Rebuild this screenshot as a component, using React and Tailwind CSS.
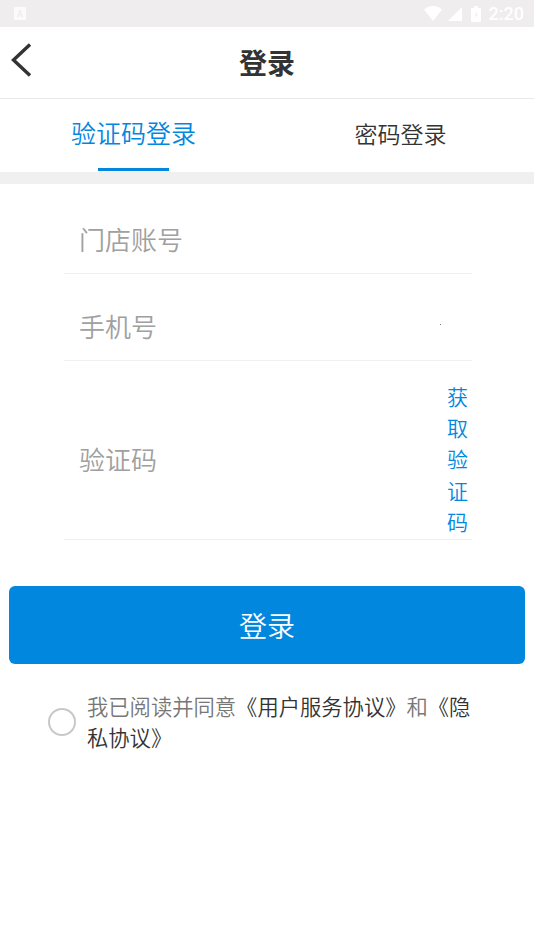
import { useState } from 'react';

const fields = [
  { name: 'store', placeholder: '门店账号', row: 'h-[90px] pt-[22px]' },
  { name: 'phone', placeholder: '手机号', row: 'h-[87px] pt-[18px]' },
  { name: 'code', placeholder: '验证码', row: 'h-[179px] pt-[18px]' },
];

const StatusBar = () => (
  <div className="h-[27px] bg-[#efedee] flex items-center justify-between pl-[14px] pr-[10px] text-white">
    <div className="w-3 h-[13px] rounded-[1px] bg-[#fcfbfc] flex items-center justify-center">
      <span className="text-[9px] leading-none font-bold text-[#efedee]">A</span>
    </div>
    <div className="flex items-center">
      <svg width="18" height="15" viewBox="0 0 18 15" fill="currentColor">
        <path d="M9 15 0 3.6C2.4 1.4 5.5 0 9 0s6.600 1.400 9 3.600z" />
      </svg>
      <svg className="ml-[6px]" width="14" height="14" viewBox="0 0 14 14" fill="currentColor">
        <path d="M14 0v14H0z" />
      </svg>
      <svg className="ml-[9px]" width="10" height="16" viewBox="0 0 10 16">
        <path d="M3 0h4v2h2a1 1 0 0 1 1 1v12a1 1 0 0 1-1 1H1a1 1 0 0 1-1-1V3a1 1 0 0 1 1-1h2z" fill="currentColor" />
        <path d="M5.500 5 4 9.500h1v3l1.500-4.500H5.500z" fill="#efedee" />
      </svg>
      <span className="ml-[8px] font-[Roboto] font-medium text-[18px] leading-none">2:20</span>
    </div>
  </div>
);

const App = () => {
  const [agreed, setAgreed] = useState(false);

  return (
    <div className="min-h-screen bg-white text-[#333333] font-[350] font-['Noto_Sans_CJK_SC',sans-serif]">
      <StatusBar />

      {/* Header */}
      <header className="h-[72px] border-b border-[#e8e8e8] grid grid-cols-[60px_1fr_60px] items-center">
        <button type="button" aria-label="返回" className="pl-[11px] pb-[6px]">
          <svg width="22" height="34" viewBox="0 0 22 34" fill="none" stroke="#333" strokeWidth="3.400">
            <path d="M19 1.500 2.500 17 19 32.500" />
          </svg>
        </button>
        <h1 className="text-center text-[28px] leading-[40px] pb-px font-bold">登录</h1>
      </header>

      {/* Tabs */}
      <nav className="h-[85px] border-b-[12px] border-[#f0f0f0] grid grid-cols-2">
        <button type="button" className="flex flex-col items-center justify-between text-[#0287df]">
          <span className="text-[25px] leading-[66px]">验证码登录</span>
          <span className="w-[71px] h-[3px] mb-px bg-[#0287df]" />
        </button>
        <button type="button" className="flex justify-center">
          <span className="text-[23px] leading-[68px]">密码登录</span>
        </button>
      </nav>

      {/* Form */}
      <form className="ml-16 mr-[62px]">
        {fields.map((field) => (
          <div key={field.name} className={`border-b border-[#f0f0f0] flex items-center ${field.row}`}>
            <input
              name={field.name}
              placeholder={field.placeholder}
              className="flex-1 min-w-0 h-10 mb-0.5 pl-[15px] text-[26px] outline-none placeholder:text-[#a0a0a0]"
            />
            {field.name === 'phone' && <span className="size-px mr-[31px] mb-1 bg-[#777777]" />}
            {field.name === 'code' && (
              <button type="button" className="w-[21px] mr-1 text-[21px] leading-[31.200px] text-[#0287df]">
                获取验证码
              </button>
            )}
          </div>
        ))}
      </form>

      <div className="px-[9px] pt-[46px]">
        <button type="button" className="w-full h-[78px] rounded-md bg-[#0287df] text-white text-[28px]">
          登录
        </button>
      </div>

      {/* Agreement */}
      <div className="mt-[26px] pl-12 flex items-center">
        <button
          type="button"
          aria-label="同意协议"
          onClick={() => setAgreed(!agreed)}
          className={`size-7 shrink-0 mt-0.5 rounded-full border-2 border-[#c8c8c8] ${agreed ? 'bg-[#0287df]' : 'bg-white'}`}
        />
        <p className="ml-[11px] w-[390px] text-[21.300px] leading-[31px] text-[#777777]">
          我已阅读并同意<span className="text-[#333333]">《用户服务协议》</span>和
          <span className="text-[#333333]">《隐私协议》</span>
        </p>
      </div>
    </div>
  );
};

export default App;
